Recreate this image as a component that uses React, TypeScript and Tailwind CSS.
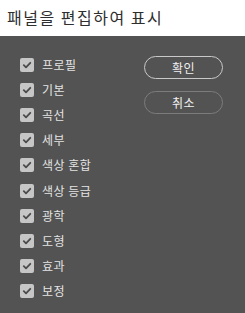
const items = ["프로필", "기본", "곡선", "세부", "색상 혼합", "색상 등급", "광학", "도형", "효과", "보정"]

const Check = () => {
  return (
    <span className="flex h-[14px] w-[14px] items-center justify-center rounded-[2px] bg-[#c6c6c6]">
      <svg width="10" height="10" viewBox="0 0 10 10" fill="none">
        <path d="M1.8 5.2 L4 7.3 L8.3 2.8" stroke="#4b4b4b" strokeWidth="1.8" strokeLinecap="round" strokeLinejoin="round" />
      </svg>
    </span>
  )
}

const App = () => {
  return (
    <div className="flex h-[313px] w-[245px] flex-col font-['Noto_Sans_CJK_KR',sans-serif]">
      <div className="flex h-[36px] items-center bg-white pl-[7px] pb-[2px] text-[16px] tracking-[1.5px] text-[#2e2e2e]">
        패널을 편집하여 표시
      </div>
      <div className="flex flex-1 bg-[#535353]">
        <div className="flex flex-col pl-[20px] pt-[16px]">
          {items.map((item) => (
            <label key={item} className="flex h-[25.2px] items-center gap-[8px] text-[12px] tracking-[0.5px] text-[#e4e4e4]">
              <Check />
              <span className="leading-none">{item}</span>
            </label>
          ))}
        </div>
        <div className="ml-auto flex flex-col gap-[12px] pr-[22px] pt-[20px]">
          <button className="flex h-[23px] w-[79px] items-center justify-center rounded-full border-[1.5px] border-[#c9c9c9] text-[12px] tracking-[0.5px] text-[#f0f0f0]">
            확인
          </button>
          <button className="flex h-[23px] w-[79px] items-center justify-center rounded-full border-[1.5px] border-[#7c7c7c] text-[12px] tracking-[0.5px] text-[#f0f0f0]">
            취소
          </button>
        </div>
      </div>
    </div>
  )
}

export default App
